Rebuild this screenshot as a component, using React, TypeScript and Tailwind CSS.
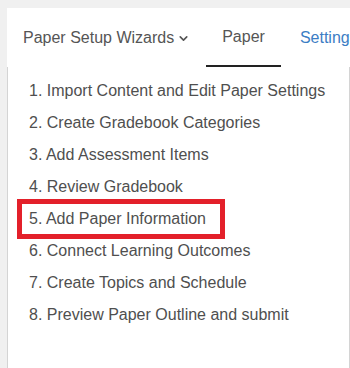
import { ChevronDown } from 'lucide-react'

const steps = [
  'Import Content and Edit Paper Settings',
  'Create Gradebook Categories',
  'Add Assessment Items',
  'Review Gradebook',
  'Add Paper Information',
  'Connect Learning Outcomes',
  'Create Topics and Schedule',
  'Preview Paper Outline and submit',
]

export default function App() {
  return (
    <div className="w-[350px] h-[368px] overflow-hidden bg-[#f0f0f0] pl-[7px] pt-[8px] font-['Liberation_Sans',Arial,sans-serif] text-[16px]">
      <div className="h-full bg-white flex flex-col">
        {/* Top nav */}
        <nav className="h-[59px] flex items-stretch shrink-0 whitespace-nowrap">
          <button className="flex items-center pl-4 pr-4 text-[#555]">
            Paper Setup Wizards
            <ChevronDown size={13} strokeWidth={3} className="ml-[3px] mt-[2px]" />
          </button>
          <button className="flex items-center px-4 text-[#555] border-b-2 border-[#222]">
            Paper
          </button>
          <button className="flex items-center px-4 ml-[3px] text-[#3b7dc4]">
            Settings
          </button>
        </nav>

        {/* Dropdown */}
        <div className="flex-1 border-l border-r border-[#d4d4d4] pt-[8px]">
          <ul className="text-[#4f4f4f]">
            {steps.map((s, i) => (
              <li key={s} className="h-[32px] flex items-center pl-[21px] whitespace-nowrap">
                {i === 4 ? (
                  <span className="inline-flex items-center h-[40px] -ml-[12px] border-[5px] border-[#e3202a] pl-[7px] pr-[14px]">
                    {i + 1}. {s}
                  </span>
                ) : (
                  <span>{i + 1}. {s}</span>
                )}
              </li>
            ))}
          </ul>
        </div>
      </div>
    </div>
  )
}
